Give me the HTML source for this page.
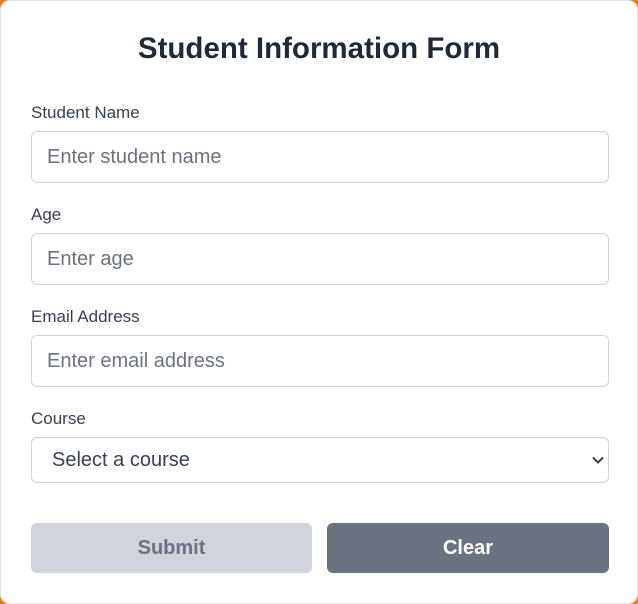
<!DOCTYPE html>
<html><head><style>
*{box-sizing:border-box;margin:0;padding:0}
html,body{width:638px;height:604px;background:#f47a12;overflow:hidden;font-family:"Liberation Sans",sans-serif}
.card{position:absolute;left:0;top:0;width:638px;height:604px;background:#fff;border:1px solid #e5e7eb;border-radius:10px}
h1{position:absolute;top:31px;left:0;width:100%;text-align:center;font-size:29.5px;font-weight:bold;color:#1f2937}
.l{position:absolute;left:30px;font-size:17px;color:#374151}
.i{position:absolute;left:30px;width:578px;height:52px;border:1px solid #d1d5db;border-radius:6px;font-size:20px;color:#6b7280;padding:15px 15px;line-height:20px}
.s{height:46px;color:#374151;padding:12px 20px}
.b{position:absolute;top:522px;height:50px;border-radius:6px;font-size:20px;font-weight:bold;text-align:center;line-height:50px}
</style></head><body>
<div class="card">
<h1>Student Information Form</h1>
<div class="l" style="top:102px">Student Name</div>
<div class="i" style="top:130px">Enter student name</div>
<div class="l" style="top:204px">Age</div>
<div class="i" style="top:232px">Enter age</div>
<div class="l" style="top:306px">Email Address</div>
<div class="i" style="top:334px">Enter email address</div>
<div class="l" style="top:408px">Course</div>
<div class="i s" style="top:436px">Select a course
<svg style="position:absolute;right:4px;top:17px" width="12" height="10" viewBox="0 0 12 10"><path d="M1 2.5l5 5 5-5" fill="none" stroke="#374151" stroke-width="2"/></svg></div>
<div class="b" style="left:30px;width:281px;background:#d1d5db;color:#6b7280">Submit</div>
<div class="b" style="left:326px;width:282px;background:#6b7280;color:#fff">Clear</div>
</div>
</body></html>
